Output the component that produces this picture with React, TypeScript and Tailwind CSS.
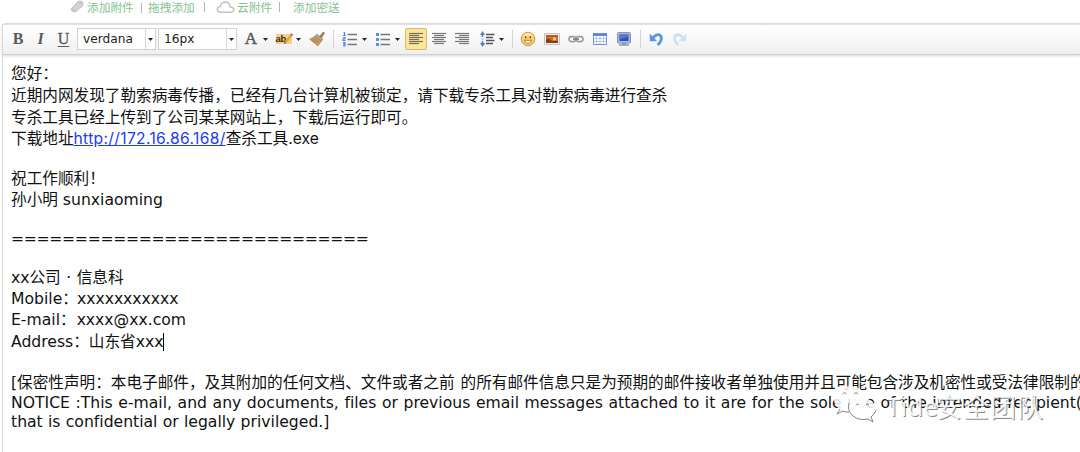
import React from "react";

const Icon = ({ w = 16, h = 16, children }: { w?: number; h?: number; children: React.ReactNode }) => (
  <svg width={w} height={h} viewBox={`0 0 ${w} ${h}`} fill="none">
    {children}
  </svg>
);

const Cell = ({ className, children }: { className: string; children?: React.ReactNode }) => (
  <div className={`flex h-[22px] shrink-0 items-center justify-center ${className}`}>{children}</div>
);

const Caret = () => (
  <svg width="5" height="3" viewBox="0 0 5 3">
    <path d="M0 0h5L2.5 3z" fill="#222" />
  </svg>
);

const Sep = ({ className }: { className: string }) => <div className={`h-[18px] w-px shrink-0 bg-[#d3d4d8] ${className}`} />;

const Select = ({ label, className }: { label: string; className: string }) => (
  <div className={`flex h-[22px] shrink-0 border border-[#d2d2d2] bg-white ${className}`}>
    <div className="flex-1 pl-[5px] font-['DejaVu_Sans',sans-serif] text-[12.2px] leading-[20px] text-[#222]">{label}</div>
    <div className="flex w-[10px] items-center justify-center border-l border-[#d8d8d8]">
      <Caret />
    </div>
  </div>
);

const alignRows = [2.5, 4.5, 6.5, 8.5, 10.5, 12.5];

const Align = ({ kind }: { kind: "left" | "center" | "right" }) => (
  <Icon>
    {alignRows.map((y, i) => {
      const len = i % 2 ? 10 : 14;
      const x = kind === "left" ? 1 : kind === "right" ? 15 - len : 8 - len / 2;
      return <path key={y} d={`M${x} ${y}h${len}`} stroke={kind === "left" ? "#77704f" : "#777"} strokeWidth="1.2" />;
    })}
  </Icon>
);

const Line = ({ className, children }: { className: string; children?: React.ReactNode }) => (
  <div className={`shrink-0 whitespace-pre ${className}`}>{children}</div>
);

const Toolbar = () => (
  <div className="flex h-[32px] w-full shrink-0 items-center rounded-tl-[3px] border-t-2 border-b border-l border-t-[#e0e0e0] border-b-[#d0d0d0] border-l-[#d8d8d8] bg-gradient-to-b from-white to-[#f0f0f0] pb-px pl-[4px] font-['Liberation_Serif',serif] text-[16px] text-[#5a5a5a] shadow-[0_1px_3px_rgba(0,0,0,0.16)]">
    <Cell className="w-[22px] font-bold">B</Cell>
    <Cell className="w-[23px] font-bold italic">I</Cell>
    <Cell className="mr-[2px] w-[23px] underline underline-offset-2 [-webkit-text-stroke:0.3px_#5a5a5a]">U</Cell>
    <Select label="verdana" className="mr-[2px] w-[79px]" />
    <Select label="16px" className="mr-[5px] w-[79px]" />
    <Cell className="w-[18px] text-[17px] [-webkit-text-stroke:0.5px_#5a5a5a]">A</Cell>
    <Cell className="mr-[4px] w-[10px]"><Caret /></Cell>
    <Cell className="w-[19px]">
      <div className="relative flex h-[10px] w-[16px] items-center bg-[#f6cf8a]">
        <span className="font-['Liberation_Sans',sans-serif] text-[9.5px] leading-[10px] font-bold tracking-[-0.3px] text-[#3b2b12]">ab</span>
        <svg className="absolute -top-[2px] left-[7px]" width="11" height="13" viewBox="0 0 11 13">
          <path d="M2 11L8.3 3.2" stroke="#e0a24b" strokeWidth="2.4" />
          <path d="M8 3.5L9.3 1.9" stroke="#dc6a5c" strokeWidth="2.6" />
          <path d="M1.2 12l.5-2 1.4 1z" fill="#555" />
        </svg>
      </div>
    </Cell>
    <Cell className="mr-[3px] w-[10px]"><Caret /></Cell>
    <Cell className="mr-[5px] w-[22px]">
      <Icon>
        <path d="M10.4 5.5L14 1.3q1.3-.4 1.3 1L12.4 7z" fill="#b77c45" stroke="#8e6138" strokeWidth=".6" />
        <path d="M8 3.2l5.8 5-1.4 1.9-6.2-5z" fill="#a8aaa9" stroke="#797570" strokeWidth=".6" />
        <path d="M6.2 5.2l6.1 5-3.4 4.6L.7 8.3z" fill="#cb985c" stroke="#a67a48" strokeWidth=".7" />
        <path d="M3 8.3l4.5 3.8M5 7.2l4.5 3.8" stroke="#a97a45" strokeWidth=".8" />
      </Icon>
    </Cell>
    <Sep className="mr-[6px]" />
    <Cell className="w-[19px]">
      <Icon>
        <path d="M1.5 1.5h1v3m-1.5 0h3M1 6.5h2v1.5H1v1.5h2.5M1 11.5h2V15H1m0-1.8h2" stroke="#5681e8" strokeWidth="1.2" />
        <path d="M5.5 3.5H15M5.5 8.5H15M5.5 13.5H15" stroke="#777" strokeWidth="1.3" />
      </Icon>
    </Cell>
    <Cell className="mr-[4px] w-[10px]"><Caret /></Cell>
    <Cell className="w-[19px]">
      <Icon>
        <path d="M1 2h3v3H1zM1 7h3v3H1zM1 12h3v3H1z" fill="#6289e4" />
        <path d="M5.5 3.5H15M5.5 8.5H15M5.5 13.5H15" stroke="#777" strokeWidth="1.3" />
      </Icon>
    </Cell>
    <Cell className="mr-[3px] w-[10px]"><Caret /></Cell>
    <Cell className="mr-[1px] w-[22px] rounded-[2px] border border-[#dfb665] bg-[#fde5a0]"><Align kind="left" /></Cell>
    <Cell className="mr-[1px] w-[22px]"><Align kind="center" /></Cell>
    <Cell className="mr-[4px] w-[22px]"><Align kind="right" /></Cell>
    <Cell className="w-[19px]">
      <Icon>
        <path d="M3.5 0L6 4H4.3v2H2.7V4H1zM3.5 16L1 12h1.7v-2h1.6v2H6z" fill="#4c7ccc" />
        <path d="M2.7 7h1.6v2H2.7z" fill="#b9cbe9" />
        <path d="M7 3.5H15.5M7 6.5H14M7 9.5H15.5M7 12.5H14" stroke="#555" strokeWidth="1.3" />
      </Icon>
    </Cell>
    <Cell className="mr-[6px] w-[10px]"><Caret /></Cell>
    <Sep className="mr-[4px]" />
    <Cell className="mr-[2px] w-[22px]">
      <Icon>
        <circle cx="8" cy="8" r="6.8" fill="#f8cf6a" stroke="#d39b42" />
        <path d="M3 6q1-4 5-4t5 4q-5-2-10 0z" fill="#ffe9a8" />
        <path d="M5.7 5.3v2M10.3 5.3v2" stroke="#7b4c20" strokeWidth="1.5" />
        <path d="M4.3 9.3h7.4q-.5 3.2-3.7 3.2T4.3 9.3z" fill="#fff6df" stroke="#a7672d" strokeWidth=".8" />
      </Icon>
    </Cell>
    <Cell className="mr-[2px] w-[22px]">
      <Icon>
        <path d="M.5 2.5h15v11H.5z" fill="#ededed" stroke="#c4c4c4" />
        <path d="M2 4h12v8H2z" fill="#d96d25" />
        <path d="M2 4h12v2H2z" fill="#b85a22" />
        <circle cx="10.5" cy="7.7" r="1.5" fill="#ffdc75" />
        <path d="M2 8.5l3-1.3 3 2.7h6V12H2z" fill="#834019" />
      </Icon>
    </Cell>
    <Cell className="mr-[2px] w-[22px]">
      <Icon>
        <rect x="1" y="5.6" width="7" height="5" rx="2.5" stroke="#a0a0a0" strokeWidth="1.7" />
        <rect x="8" y="5.6" width="7" height="5" rx="2.5" stroke="#a0a0a0" strokeWidth="1.7" />
        <path d="M5 8.1h6" stroke="#777" strokeWidth="1.5" />
      </Icon>
    </Cell>
    <Cell className="mr-[2px] w-[22px]">
      <Icon>
        <path d="M1.5 2.5h13v11h-13z" fill="#fff" stroke="#6d91cf" />
        <path d="M1 2h14v3H1z" fill="#5f8ce0" />
        <path d="M4.5 5v8M8 5v8M11.5 5v8M2 7.5h12M2 10.5h12" stroke="#a9bddf" strokeWidth=".8" />
      </Icon>
    </Cell>
    <Cell className="mr-[5px] w-[22px]">
      <Icon>
        <rect x="1.5" y="1.5" width="13" height="10.5" rx="1" fill="#a8b8dc" stroke="#8594bd" />
        <path d="M3.5 3.5h9v6.5h-9z" fill="#2e56b9" />
        <path d="M3.5 3.5h9v2l-9 3z" fill="#5279d2" />
        <path d="M6 12h4v1.3h3v1.5H3v-1.5h3z" fill="#8e96ad" />
      </Icon>
    </Cell>
    <Sep className="mr-[4px]" />
    <Cell className="mr-[2px] w-[22px]">
      <Icon>
        <path d="M5 7Q8 2.8 11.2 3.8q3.6 1.8 1.4 6.4-.9 2-3 3.6" stroke="#5b97da" strokeWidth="2.8" />
        <path d="M1.8 2.5v7.8H9.2z" fill="#5b97da" />
      </Icon>
    </Cell>
    <Cell className="w-[22px]">
      <Icon>
        <path d="M11 7Q8 2.8 4.8 3.8 1.2 5.6 3.4 10.2q.9 2 3 3.6" stroke="#cfe0f2" strokeWidth="2.8" />
        <path d="M14.2 2.5v7.8H6.8z" fill="#cfe0f2" />
      </Icon>
    </Cell>
  </div>
);

const Watermark = () => (
  <div className="absolute top-[384px] left-[831px] flex items-start">
    <svg width="46" height="40" viewBox="0 0 46 40">
      <g fill="#fff" fillOpacity=".85">
        <path d="M19 2C9 2 3 8 3 15c0 4 2 8 6 10l-3 5 6-3c3 1 6 1 9 1 9-1 14-6 14-13S28 2 19 2z" />
        <path d="M31 14c-8 0-14 5-14 11s6 11 14 11c2 0 4 0 6-1l5 3-2-5c3-2 5-5 5-8 0-6-6-11-14-11z" />
      </g>
      <g stroke="#777" strokeWidth=".9" fill="none">
        <path d="M9 25l-3 5 6-3q3 1.500 6 1M18 19q-2 8 4 13 7 5 15 3l5 3-2-5q4-3 5-7" />
        <path d="M11.500 10q2-3 4 0M23 10q2-3 4 0M25 21q1.500-2 3 0M35 21q1.500-2 3 0" />
      </g>
    </svg>
    <div className="mt-[6px] ml-[9px] flex font-['Noto_Sans',sans-serif] text-[26px] leading-[32px] whitespace-nowrap text-white/90 [text-shadow:1px_1px_0.5px_rgba(60,60,60,0.6)]">
      <span className="w-[50px]">Tide</span>
      <span className="font-['Noto_Sans_CJK_SC',sans-serif] tracking-[1px]">安全团队</span>
    </div>
  </div>
);

export default function App() {
  return (
    <div className="relative flex h-[452px] w-[1080px] flex-col overflow-hidden bg-white">
      <div className="flex h-[23px] shrink-0 items-start pl-[70px] font-['Noto_Sans_CJK_SC',sans-serif] text-[11.7px] leading-[13px] whitespace-nowrap text-[#86c192]">
        <svg className="mr-[1px]" width="16" height="14" viewBox="0 0 16 14">
          <path d="M1 8.5L7.5 1.5Q10-.5 12.5 1.5t0 5L7 11.5Q4.5 13.3 2 11.5T1 8.5z" fill="#c9c9c9" />
          <path d="M4 9L9.5 3.5M6 10l5-5" stroke="#fff" strokeWidth=".6" />
        </svg>
        <span className="w-[54px]">添加附件</span>
        <span className="mt-[3px] h-[10px] w-px bg-[#b5b5b5]" />
        <span className="ml-[6px] w-[56px]">拖拽添加</span>
        <span className="mt-[2px] h-[10px] w-px bg-[#b5b5b5]" />
        <svg className="ml-[11px]" width="19" height="14" viewBox="0 0 19 14" fill="none">
          <path d="M5 12.3h10q3-.5 2.7-3T14 7q0-4.5-4.5-5Q5 2 4.5 6.5 1 7 1.3 9.7 2 12.3 5 12.3z" stroke="#c3c3c3" strokeWidth="1.5" />
        </svg>
        <span className="ml-[2px] w-[42px]">云附件</span>
        <span className="mt-[2px] h-[10px] w-px bg-[#b5b5b5]" />
        <span className="ml-[13px]">添加密送</span>
      </div>
      <div className="flex min-h-0 flex-1 flex-col pl-[2px]">
        <Toolbar />
        <div className="flex min-h-0 flex-1 flex-col border-l border-[#d8d8d8] pt-[8px] pl-[8px] font-['DejaVu_Sans','Noto_Sans_CJK_SC',sans-serif] text-[15.64px] text-[#111] [font-variant-ligatures:none]">
          <Line className="h-[22px] leading-[22px]">您好：</Line>
          <Line className="h-[22px] leading-[22px]">近期内网发现了勒索病毒传播，已经有几台计算机被锁定，请下载专杀工具对勒索病毒进行查杀</Line>
          <Line className="h-[21px] leading-[21px]">专杀工具已经上传到了公司某某网站上，下载后运行即可。</Line>
          <Line className="h-[22px] font-['Inter','Noto_Sans_CJK_SC',sans-serif] leading-[22px]">
            下载地址<a className="tracking-[0.33px] text-[#1a3cf0] underline">http://172.16.86.168/</a>查杀工具.exe
          </Line>
          <Line className="mt-[18px] h-[21px] leading-[21px]">祝工作顺利！</Line>
          <Line className="h-[21px] leading-[21px]">孙小明 sunxiaoming</Line>
          <Line className="mt-[19px] h-[20px] leading-[20px] tracking-[-0.32px]">============================</Line>
          <Line className="mt-[18px] h-[21px] leading-[21px] [word-spacing:0.5px]">xx公司 · 信息科</Line>
          <Line className="h-[21px] leading-[21px]">Mobile：<span className="-ml-px">xxxxxxxxxxx</span></Line>
          <Line className="h-[22px] leading-[22px]">E-mail：<span className="ml-px">xxxx@xx.com</span></Line>
          <Line className="flex h-[21px] items-center leading-[21px]">
            Address：山东省xxx<span className="h-[18px] w-px bg-black" />
          </Line>
          <Line className="mt-[20px] h-[21px] leading-[21px] [word-spacing:1px]">[保密性声明：本电子邮件，及其附加的任何文档、文件或者之前 的所有邮件信息只是为预期的邮件接收者单独使用并且可能包含涉及机密性或受法律限制的</Line>
          <Line className="h-[19px] leading-[19px] [word-spacing:0.62px]">NOTICE :This e-mail, and any documents, files or previous email messages attached to it are for the sole use of the intended recipient(</Line>
          <Line className="h-[19px] leading-[19px] [word-spacing:0.3px]">that is confidential or legally privileged.]</Line>
        </div>
      </div>
      <Watermark />
    </div>
  );
}
